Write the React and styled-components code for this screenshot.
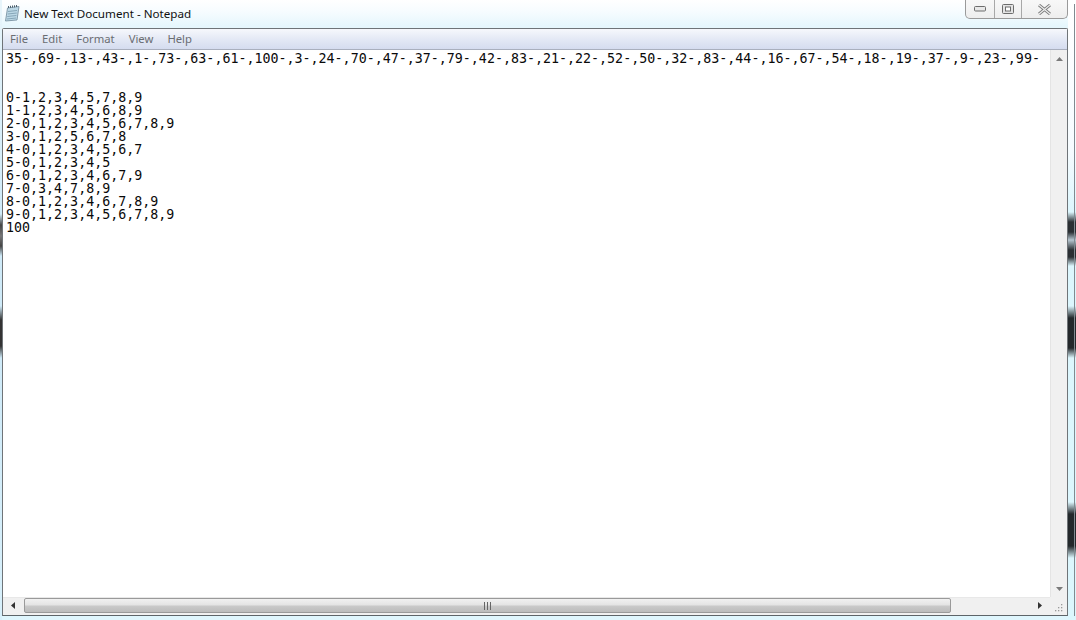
import React from "react";
import styled, { createGlobalStyle } from "styled-components";

const Global = createGlobalStyle`
  html, body { margin: 0; padding: 0; width: 1076px; height: 620px; overflow: hidden; background: #fff; }
  #root { width: 1076px; height: 620px; }
`;

const Desktop = styled.div`
  width: 1076px;
  height: 620px;
  display: flex;
  flex-direction: column;
  box-sizing: border-box;
  font-family: "Noto Sans", "Open Sans", sans-serif;
  background:
    linear-gradient(#808a90, #808a90) right 1px top 4px / 1px 612px no-repeat,
    linear-gradient(180deg, #fff 0, #f6fcff 150px, #dcf6fd 212px, #2a2f33 222px, #2a2f33 232px, #b6c6d0 240px, #2a2f33 250px, #2a2f33 257px, #dcf6fd 266px, #dcf6fd 306px, #23282b 318px, #23282b 348px, #dcf6fd 358px, #dcf6fd 502px, #23282b 514px, #23282b 546px, #dcf6fd 558px, #dcf6fd 620px) right 0 top 0 / 8px 100% no-repeat,
    linear-gradient(180deg, #e8f5fb 0, #cfeaf8 214px, #444 225px, #777 236px, #444 246px, #cfeaf8 256px, #cfeaf8 306px, #333 320px, #333 346px, #cfeaf8 358px, #d8f0fb 620px) left 0 top 0 / 2px 100% no-repeat,
    linear-gradient(180deg, #fff 0, #f6fcff 12px, #e6f7fd 26px) 0 0 / 100% 28px no-repeat,
    linear-gradient(180deg, #dff6fd, #dff6fd) 0 100% / 100% 5px no-repeat;
`;

const TitleBar = styled.header`
  height: 28px;
  display: flex;
  align-items: flex-start;
  padding: 0 8px 0 4px;
  flex: none;
  box-sizing: border-box;
`;

const AppIcon = styled.svg`
  width: 16px;
  height: 17px;
  margin-top: 5px;
  flex: none;
`;

const TitleText = styled.span`
  font-family: "Noto Sans", sans-serif;
  font-size: 11.65px;
  line-height: 16px;
  margin: 6px 0 0 4px;
  color: #111;
`;

const Caption = styled.div`
  display: flex;
  margin-left: auto;
  height: 19px;
  border: 1px solid #9a9a9a;
  border-top: none;
  border-radius: 0 0 5px 5px;
  background: linear-gradient(180deg, #f8f8f8, #eeeeee);
  box-sizing: border-box;
`;

const CapButton = styled.div`
  width: ${(p) => p.$w}px;
  display: flex;
  align-items: center;
  justify-content: center;
  border-left: ${(p) => (p.$first ? "none" : "1px solid #a8a8a8")};
  box-sizing: border-box;
`;

const Window = styled.main`
  width: 1066px;
  margin-left: 2px;
  height: 588px;
  flex: none;
  border: 1px solid #6f7478;
  border-bottom-color: #5d6468;
  border-radius: 2px 2px 0 0;
  box-sizing: border-box;
  display: flex;
  flex-direction: column;
  background: #f0f0f0;
`;

const MenuBar = styled.nav`
  height: 21px;
  flex: none;
  display: flex;
  align-items: center;
  gap: 14px;
  padding: 0 0 0 7px;
  box-sizing: border-box;
  background: linear-gradient(180deg, #f6f8fc 0, #e4e9f5 50%, #d5dcef 100%);
  border-bottom: 1px solid #a9afbd;
`;

const MenuItem = styled.span`
  font-size: 11.3px;
  color: #6a6d72;
  line-height: 16px;
`;

const Client = styled.div`
  flex: 1;
  min-height: 0;
  display: grid;
  grid-template-columns: 1fr 17px;
  grid-template-rows: 1fr 18px;
`;

const Editor = styled.pre`
  margin: 0;
  padding: 2px 0 0 3px;
  overflow: hidden;
  background: #fff;
  color: #0a0a0a;
  font-family: "DejaVu Sans Mono", monospace;
  font-size: 13.32px;
  line-height: 13px;
`;

const VScroll = styled.div`
  background: #f0f0f0;
  border-left: 1px solid #e4e4e4;
  display: flex;
  flex-direction: column;
  justify-content: space-between;
  align-items: center;
  padding: 7px 0 6px;
  box-sizing: border-box;
`;

const HScroll = styled.div`
  background: #f0f0f0;
  display: flex;
  align-items: flex-start;
  box-sizing: border-box;
  padding: 0 8px 0 8px;
  border-top: 1px solid #e8e8e8;
`;

const ArrowSlot = styled.div`
  width: ${(p) => p.$w}px;
  height: 15px;
  display: flex;
  align-items: center;
  justify-content: ${(p) => (p.$end ? "flex-end" : "flex-start")};
  flex: none;
`;

const Thumb = styled.div`
  width: 927px;
  height: 15px;
  flex: none;
  border: 1px solid #9a9a9a;
  border-radius: 2px;
  box-sizing: border-box;
  display: flex;
  align-items: center;
  justify-content: center;
  background: linear-gradient(180deg, #f1f1f1 0, #e4e4e4 45%, #c9c9c9 55%, #bcbcbc 100%);
`;

const Track = styled.div`
  flex: 1;
`;

const Grip = styled.svg`
  display: block;
`;

const Corner = styled.div`
  background: #f0f0f0;
  display: flex;
  align-items: flex-end;
  justify-content: flex-end;
  padding: 0 4px 3px 0;
`;

const text = `35-,69-,13-,43-,1-,73-,63-,61-,100-,3-,24-,70-,47-,37-,79-,42-,83-,21-,22-,52-,50-,32-,83-,44-,16-,67-,54-,18-,19-,37-,9-,23-,99-


0-1,2,3,4,5,7,8,9
1-1,2,3,4,5,6,8,9
2-0,1,2,3,4,5,6,7,8,9
3-0,1,2,5,6,7,8
4-0,1,2,3,4,5,6,7
5-0,1,2,3,4,5
6-0,1,2,3,4,6,7,9
7-0,3,4,7,8,9
8-0,1,2,3,4,6,7,8,9
9-0,1,2,3,4,5,6,7,8,9
100`;

const menus = ["File", "Edit", "Format", "View", "Help"];

export default function App() {
  return (
    <Desktop>
      <Global />
      <TitleBar>
        <AppIcon viewBox="0 0 16 17">
          <path d="M3.5 3 L15 1.5 L13 15 L1.5 16 Z" fill="#bcd8e6" stroke="#6f8898" strokeWidth="0.8" />
          <path d="M4 6.5 L13 5.5 M3.7 9 L12.8 8 M3.3 11.5 L12.4 10.5 M3 14 L12 13" stroke="#86a6b8" strokeWidth="1" />
          <path d="M4.5 3 V1 M6.5 2.8 V0.8 M8.5 2.5 V0.5 M10.5 2.3 V0.3 M12.5 2 V0" stroke="#4c5f6c" strokeWidth="1" />
        </AppIcon>
        <TitleText>New Text Document - Notepad</TitleText>
        <Caption>
          <CapButton $w={28} $first>
            <svg width="13" height="8" viewBox="0 0 13 8"><rect x="0.5" y="1.5" width="11" height="4.5" rx="1" fill="#e8e8e8" stroke="#6c6c6c" /></svg>
          </CapButton>
          <CapButton $w={27}>
            <svg width="13" height="11" viewBox="0 0 13 11"><rect x="0.5" y="0.5" width="11" height="9" rx="1" fill="#e4e4e4" stroke="#6c6c6c" /><rect x="3.5" y="3" width="5" height="4" fill="#fff" stroke="#6c6c6c" /></svg>
          </CapButton>
          <CapButton $w={46}>
            <svg width="13" height="11" viewBox="0 0 13 11"><path d="M1 1 L12 10 M12 1 L1 10" stroke="#7a7a7a" strokeWidth="3" /><path d="M1 1 L12 10 M12 1 L1 10" stroke="#ededed" strokeWidth="1.2" /></svg>
          </CapButton>
        </Caption>
      </TitleBar>
      <Window>
        <MenuBar>
          {menus.map((m) => <MenuItem key={m}>{m}</MenuItem>)}
        </MenuBar>
        <Client>
          <Editor>{text}</Editor>
          <VScroll>
            <svg width="7" height="4" viewBox="0 0 7 4"><path d="M3.5 0 L7 4 L0 4 Z" fill="#7a7a7a" /></svg>
            <svg width="7" height="4" viewBox="0 0 7 4"><path d="M0 0 L7 0 L3.5 4 Z" fill="#7a7a7a" /></svg>
          </VScroll>
          <HScroll>
            <ArrowSlot $w={13}>
              <svg width="4" height="7" viewBox="0 0 4 7"><path d="M4 0 L4 7 L0 3.5 Z" fill="#333" /></svg>
            </ArrowSlot>
            <Thumb>
              <Grip width="9" height="8" viewBox="0 0 9 8"><path d="M1.5 0V8M4.5 0V8M7.5 0V8" stroke="#666" strokeWidth="1" /></Grip>
            </Thumb>
            <Track />
            <ArrowSlot $w={4} $end>
              <svg width="4" height="7" viewBox="0 0 4 7"><path d="M0 0 L0 7 L4 3.5 Z" fill="#333" /></svg>
            </ArrowSlot>
          </HScroll>
          <Corner>
            <svg width="9" height="9" viewBox="0 0 9 9" fill="#9a9a9a"><rect x="7" y="1" width="1.3" height="1.3" /><rect x="4" y="4" width="1.3" height="1.3" /><rect x="7" y="4" width="1.3" height="1.3" /><rect x="1" y="7" width="1.3" height="1.3" /><rect x="4" y="7" width="1.3" height="1.3" /><rect x="7" y="7" width="1.3" height="1.3" /></svg>
          </Corner>
        </Client>
      </Window>
    </Desktop>
  );
}
